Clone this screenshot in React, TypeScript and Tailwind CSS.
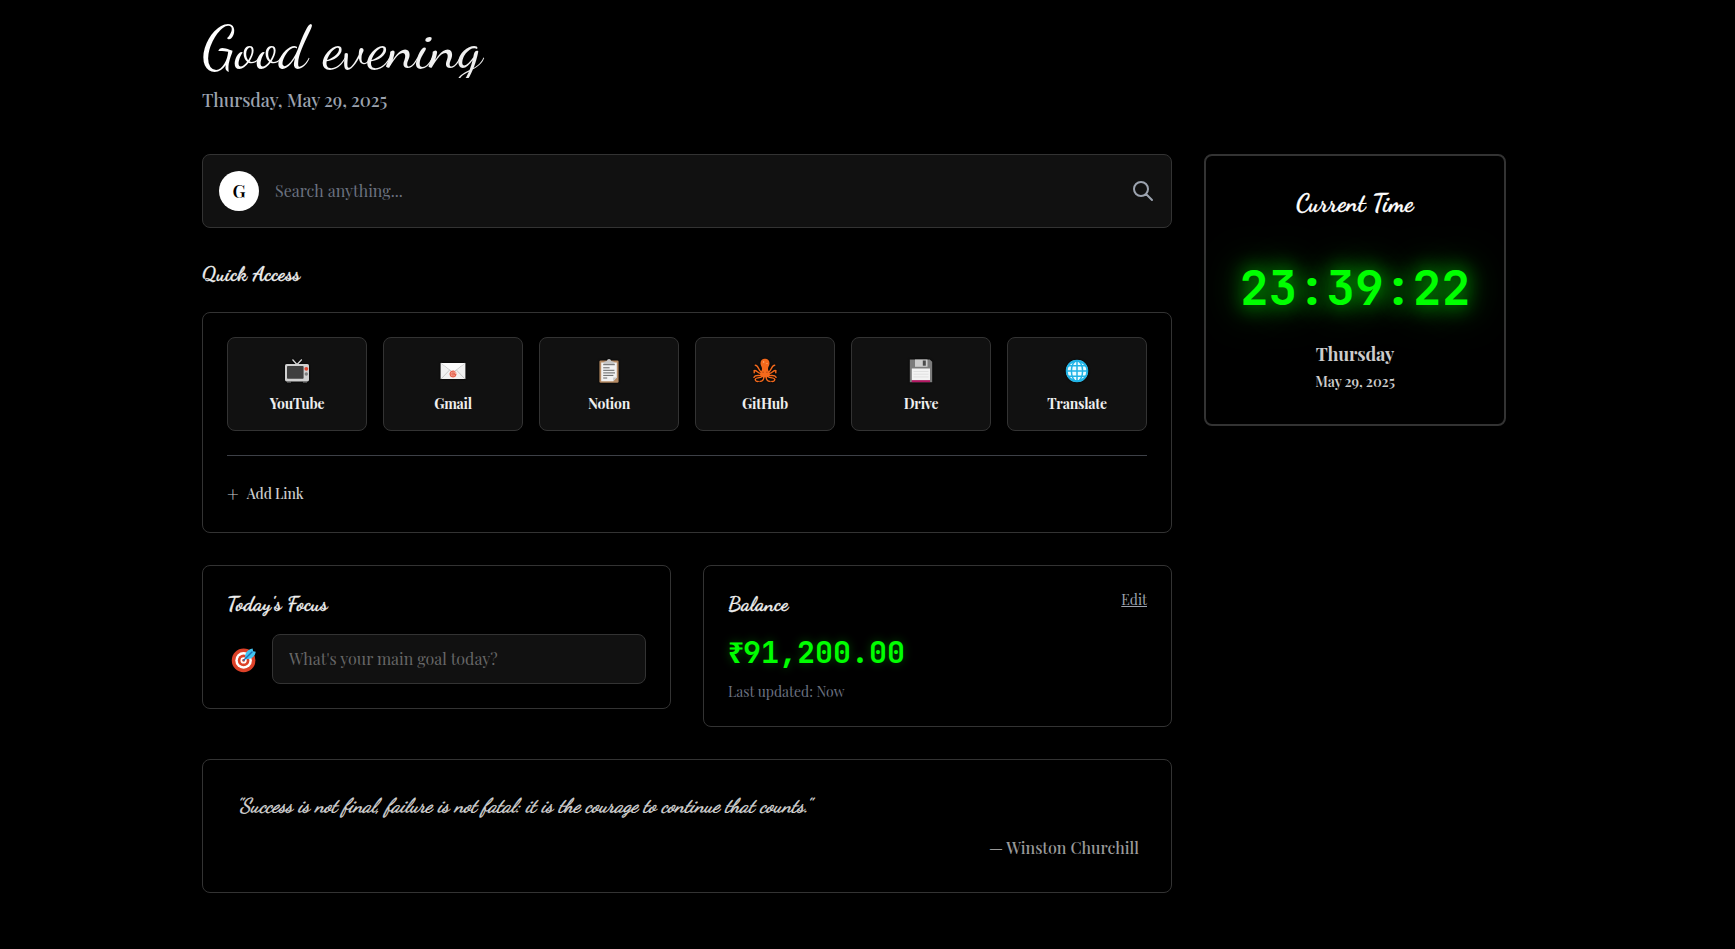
import type { ReactNode } from "react";

const script = "font-['Dancing_Script',cursive]";
const mono = "font-['JetBrains_Mono','DejaVu_Sans_Mono',monospace]";

function Television() {
  return (
    <svg viewBox="0 0 28 28" className="h-7 w-7">
      <path d="M9.5 1.5 14 6.5 18.8 1.5" fill="none" stroke="#d6d6d6" strokeWidth="1.2" />
      <path d="M11.5 6.5q2.5-3 5 0z" fill="#bdbdbd" />
      <rect x="2" y="6" width="24" height="17.4" rx="1.6" fill="#d0d0d0" />
      <path d="M4 23.4h4v1H4zM20 23.4h4v1h-4z" fill="#8a8a8a" />
      <rect x="4" y="8" width="16.6" height="12.8" rx="0.8" fill="#3f3f3f" />
      <circle cx="23.3" cy="10.8" r="1.9" fill="#e0452f" />
      <circle cx="23.3" cy="16" r="1.7" fill="#7d7d7d" />
    </svg>
  );
}

function Envelope() {
  return (
    <svg viewBox="0 0 28 28" className="h-7 w-7">
      <rect x="1.6" y="5" width="24.8" height="16" fill="#f1f1f1" />
      <path d="M2 5 14 14.5 26 5M2 21l8.6-9M26 21l-8.6-9" fill="none" stroke="#c4c4c4" strokeWidth="0.9" />
      <path d="M2 5h24L14 13.8z" fill="#fbfbfb" />
      <circle cx="14" cy="16" r="3.5" fill="#f3a597" />
      <circle cx="14" cy="16" r="2.9" fill="none" stroke="#e2553f" strokeWidth="0.9" strokeDasharray="15 3" />
      <circle cx="14" cy="16" r="1.2" fill="none" stroke="#e2553f" strokeWidth="0.8" />
      <path d="M15.3 14.7v1.7q.5 1 1.5.3" fill="none" stroke="#e2553f" strokeWidth="0.7" />
    </svg>
  );
}

function Clipboard() {
  return (
    <svg viewBox="0 0 28 28" className="h-7 w-7">
      <rect x="4.4" y="2.4" width="19.2" height="22.4" rx="1.3" fill="#b58a63" />
      <path d="M6.2 4.4h15.6v15.2l-3.6 3.6h-12z" fill="#f2f2f2" />
      <path d="M21.8 19.6h-3.6v3.6z" fill="#c9c9c9" />
      <path d="M8.5 6.6V4.9q0-1.3 1.6-1.5l1.7-.3q.4-2 2.2-2t2.2 2l1.7.3q1.6.2 1.6 1.5v1.7z" fill="#c6c6c6" />
      <path d="M8.2 6.7h11.6M8.2 9.8h6.4M8.2 12.3h11.2M8.2 14.9h11.8M8.2 17.4h10.2M8.2 20h4" stroke="#555" strokeWidth="0.9" />
    </svg>
  );
}

function Octopus() {
  return (
    <svg viewBox="0 0 28 28" className="h-7 w-7">
      <path
        d="M14 .8c3.2 0 4.7 2.3 4.5 5-.1 2-1.5 3.2-1.5 5.2 0 2 1.9 3 1.9 5.3 0 2-2 3.3-4.9 3.3s-4.9-1.3-4.9-3.3c0-2.3 1.9-3.3 1.9-5.3 0-2-1.4-3.2-1.5-5.2-.2-2.7 1.3-5 4.5-5z"
        fill="#f4691c"
      />
      <g fill="none" stroke="#f4691c" strokeWidth="1.45" strokeLinecap="round">
        <path d="M11 14C7.5 14 8 7.5 4.3 7.3M17 14c3.5 0 3-6.5 6.7-6.7" />
        <path d="M11 15.6c-5 .2-4.5-3.4-7.8-3v2.1M17 15.6c5 .2 4.5-3.4 7.8-3v2.1" />
        <path d="M10.5 17.2c-4 1-6-.7-7.6 2.1M17.5 17.2c4 1 6-.7 7.6 2.1" />
        <path d="M11.5 18.4c-3.5 2.6-6.7.4-7.3 3.1.2 1.7 1.6 2.1 3 1.9M16.5 18.4c3.5 2.6 6.7.4 7.3 3.1-.2 1.7-1.6 2.1-3 1.9" />
        <path d="M12.8 19c.2 3-1.7 4.3-3.8 4.4M15.2 19c-.2 3 1.7 4.3 3.8 4.4" />
      </g>
      <circle cx="12.6" cy="4" r="0.8" fill="#ffb27f" />
      <circle cx="16" cy="5.5" r="0.6" fill="#ffb27f" />
      <path d="M11.6 14.2h.9M15.5 14.2h.9" stroke="#7c2d0b" strokeWidth="0.9" />
    </svg>
  );
}

function Floppy() {
  return (
    <svg viewBox="0 0 28 28" className="h-7 w-7">
      <path d="M2.8 1.5h20l2.4 2.3v20.4H2.8z" fill="#7c7c7c" />
      <rect x="8" y="1.5" width="12.5" height="7.3" fill="#cccccc" />
      <rect x="15.8" y="2.5" width="3" height="5.2" fill="#4a4a4a" />
      <rect x="4.8" y="10.5" width="18.2" height="12" fill="#f3f3f3" />
      <path d="M6.5 13.5h15M6.5 16.2h15M6.5 18.9h15" stroke="#d9d9d9" strokeWidth="0.7" />
      <rect x="4.8" y="22.2" width="18.2" height="2" fill="#b51763" />
    </svg>
  );
}

function Globe() {
  return (
    <svg viewBox="0 0 28 28" className="h-7 w-7">
      <circle cx="14" cy="13" r="11" fill="#e9fbff" />
      <g fill="none" stroke="#1fb3e6">
        <circle cx="14" cy="13" r="10.3" strokeWidth="1.9" />
        <ellipse cx="14" cy="13" rx="5.6" ry="10.3" strokeWidth="1.5" />
        <path d="M14 2.5v21M3.5 13h21M5.2 7.8h17.6M5.2 18.2h17.6" strokeWidth="1.5" />
      </g>
    </svg>
  );
}

function Target() {
  return (
    <svg viewBox="0 0 28 28" className="h-7 w-7">
      <circle cx="13.6" cy="15.4" r="11.8" fill="#dd4128" />
      <circle cx="13.6" cy="15.4" r="8.3" fill="#fff" />
      <circle cx="13.6" cy="15.4" r="5.8" fill="#dd4128" />
      <circle cx="13.6" cy="15.4" r="3.1" fill="#fff" />
      <circle cx="13.6" cy="15.4" r="1.4" fill="#dd4128" />
      <path d="M15.4 13.4c-1.2-4.6 1.9-9 7.2-9.8l.5 2.7 2.7.5c-.8 5.2-5.7 8.6-10.4 6.6z" fill="#42c3f0" />
      <path d="M13.7 15.3 22 7" stroke="#1c6fb5" strokeWidth="1.4" strokeLinecap="round" />
    </svg>
  );
}

const links: { name: string; icon: ReactNode }[] = [
  { name: "YouTube", icon: <Television /> },
  { name: "Gmail", icon: <Envelope /> },
  { name: "Notion", icon: <Clipboard /> },
  { name: "GitHub", icon: <Octopus /> },
  { name: "Drive", icon: <Floppy /> },
  { name: "Translate", icon: <Globe /> },
];

function SearchBar() {
  return (
    <div className="flex h-[74px] items-center gap-4 rounded-lg border border-[#333] bg-[#111] px-4">
      <div className="flex h-10 w-10 items-center justify-center rounded-full bg-white text-lg font-semibold text-black">G</div>
      <input
        className="min-w-0 flex-1 bg-transparent text-base text-white outline-none placeholder:text-[#6b7280]"
        placeholder="Search anything..."
      />
      <svg viewBox="0 0 24 24" className="h-6 w-6 text-[#9ca3af]" fill="none" stroke="currentColor" strokeWidth="2" strokeLinecap="round" strokeLinejoin="round">
        <path d="m21 21-6-6m2-5a7 7 0 1 1-14 0 7 7 0 0 1 14 0z" />
      </svg>
    </div>
  );
}

function QuickAccess() {
  return (
    <section className="mt-8">
      <h2 className={`${script} mb-6 text-xl font-bold tracking-[0.3px] text-[#eee] [-webkit-text-stroke:0.3px_#eee]`}>Quick Access</h2>
      <div className="rounded-lg border border-[#333] p-6">
        <div className="grid grid-cols-6 gap-4">
          {links.map((link) => (
            <a key={link.name} className="flex h-[94px] flex-col items-center rounded-lg border border-[#333] bg-[#111] p-4">
              <span className="mb-2 flex h-8 items-center pt-1 drop-shadow-[0_0_1px_#000]">{link.icon}</span>
              <span className="text-sm font-bold tracking-[-0.25px] text-[#eee]">{link.name}</span>
            </a>
          ))}
        </div>
        <div className="mt-6 border-t border-[#3d4047] pt-6">
          <button className="flex h-7 items-center gap-2 text-sm font-medium tracking-[-0.1px] text-[#ccc]">
            <span className="text-xl leading-7 font-normal">+</span>
            Add Link
          </button>
        </div>
      </div>
    </section>
  );
}

function Focus() {
  return (
    <section className="rounded-lg border border-[#333] p-6">
      <h3 className={`${script} mb-4 text-xl font-bold tracking-[0.3px] text-[#eee] [-webkit-text-stroke:0.3px_#eee]`}>Today's Focus</h3>
      <div className="flex items-center gap-3">
        <span className="flex w-[33px] justify-center">
          <Target />
        </span>
        <input
          className="h-[50px] min-w-0 flex-1 rounded-lg border border-[#333] bg-[#111] px-4 pb-[2px] text-base text-white outline-none placeholder:text-[#666]"
          placeholder="What's your main goal today?"
        />
      </div>
    </section>
  );
}

function Balance() {
  return (
    <section className="rounded-lg border border-[#333] p-6">
      <div className="mb-4 flex items-start justify-between">
        <h3 className={`${script} text-xl font-bold tracking-[0.3px] text-[#eee] [-webkit-text-stroke:0.3px_#eee]`}>Balance</h3>
        <button className="text-sm text-[#9ca3af] underline">Edit</button>
      </div>
      <p className={`${mono} mb-3 text-3xl font-bold text-[#0f0] [text-shadow:0_0_10px_rgba(0,255,0,0.3)]`}>
        <span className="inline-block w-[15px] font-['Noto_Sans',sans-serif] text-[28px] leading-none">₹</span>91,200.00
      </p>
      <p className="text-sm text-[#6b7280]">Last updated: Now</p>
    </section>
  );
}

function Quote() {
  return (
    <section className="mt-8 rounded-lg border border-[#333] p-8">
      <p className={`${script} mb-4 text-xl text-[#d4d4d4] italic [-webkit-text-stroke:0.4px_#d4d4d4]`}>
        "Success is not final, failure is not fatal: it is the courage to continue that counts."
      </p>
      <p className="text-right text-base font-medium text-[#999]">— Winston Churchill</p>
    </section>
  );
}

function Clock() {
  return (
    <aside className="h-[272px] rounded-lg border-2 border-[#333] p-8 text-center">
      <h2 className={`${script} mb-8 text-2xl font-bold tracking-[0.35px] text-white [-webkit-text-stroke:0.3px_#fff]`}>Current Time</h2>
      <div
        className={`${mono} -mx-4 mb-4 text-5xl leading-[72px] font-bold text-[#0f0] [text-shadow:0_0_20px_rgba(0,255,0,0.8),0_0_40px_rgba(0,255,0,0.6)]`}
      >
        23:39:22
      </div>
      <div className="mb-1 text-lg font-bold tracking-[-0.15px] text-[#ccc]">Thursday</div>
      <div className="text-sm font-semibold tracking-[-0.1px] text-[#ccc]">May 29, 2025</div>
    </aside>
  );
}

export default function App() {
  return (
    <div className="h-[949px] overflow-hidden bg-black pt-[18px] pl-[202px] font-['Playfair_Display','Liberation_Serif',serif]">
      <div className="w-[1304px]">
        <header className="mb-10">
          <h1 className={`${script} mb-2 w-fit bg-gradient-to-r from-white to-[#eee] bg-clip-text pr-1 text-6xl tracking-[0.1px] text-transparent`}>
            Good evening
          </h1>
          <p className="text-lg font-medium tracking-[-0.13px] text-[#9ca3af]">Thursday, May 29, 2025</p>
        </header>
        <div className="grid grid-cols-4 items-start gap-8">
          <main className="col-span-3">
            <SearchBar />
            <QuickAccess />
            <div className="mt-8 grid grid-cols-2 items-start gap-8">
              <Focus />
              <Balance />
            </div>
            <Quote />
          </main>
          <Clock />
        </div>
      </div>
    </div>
  );
}
